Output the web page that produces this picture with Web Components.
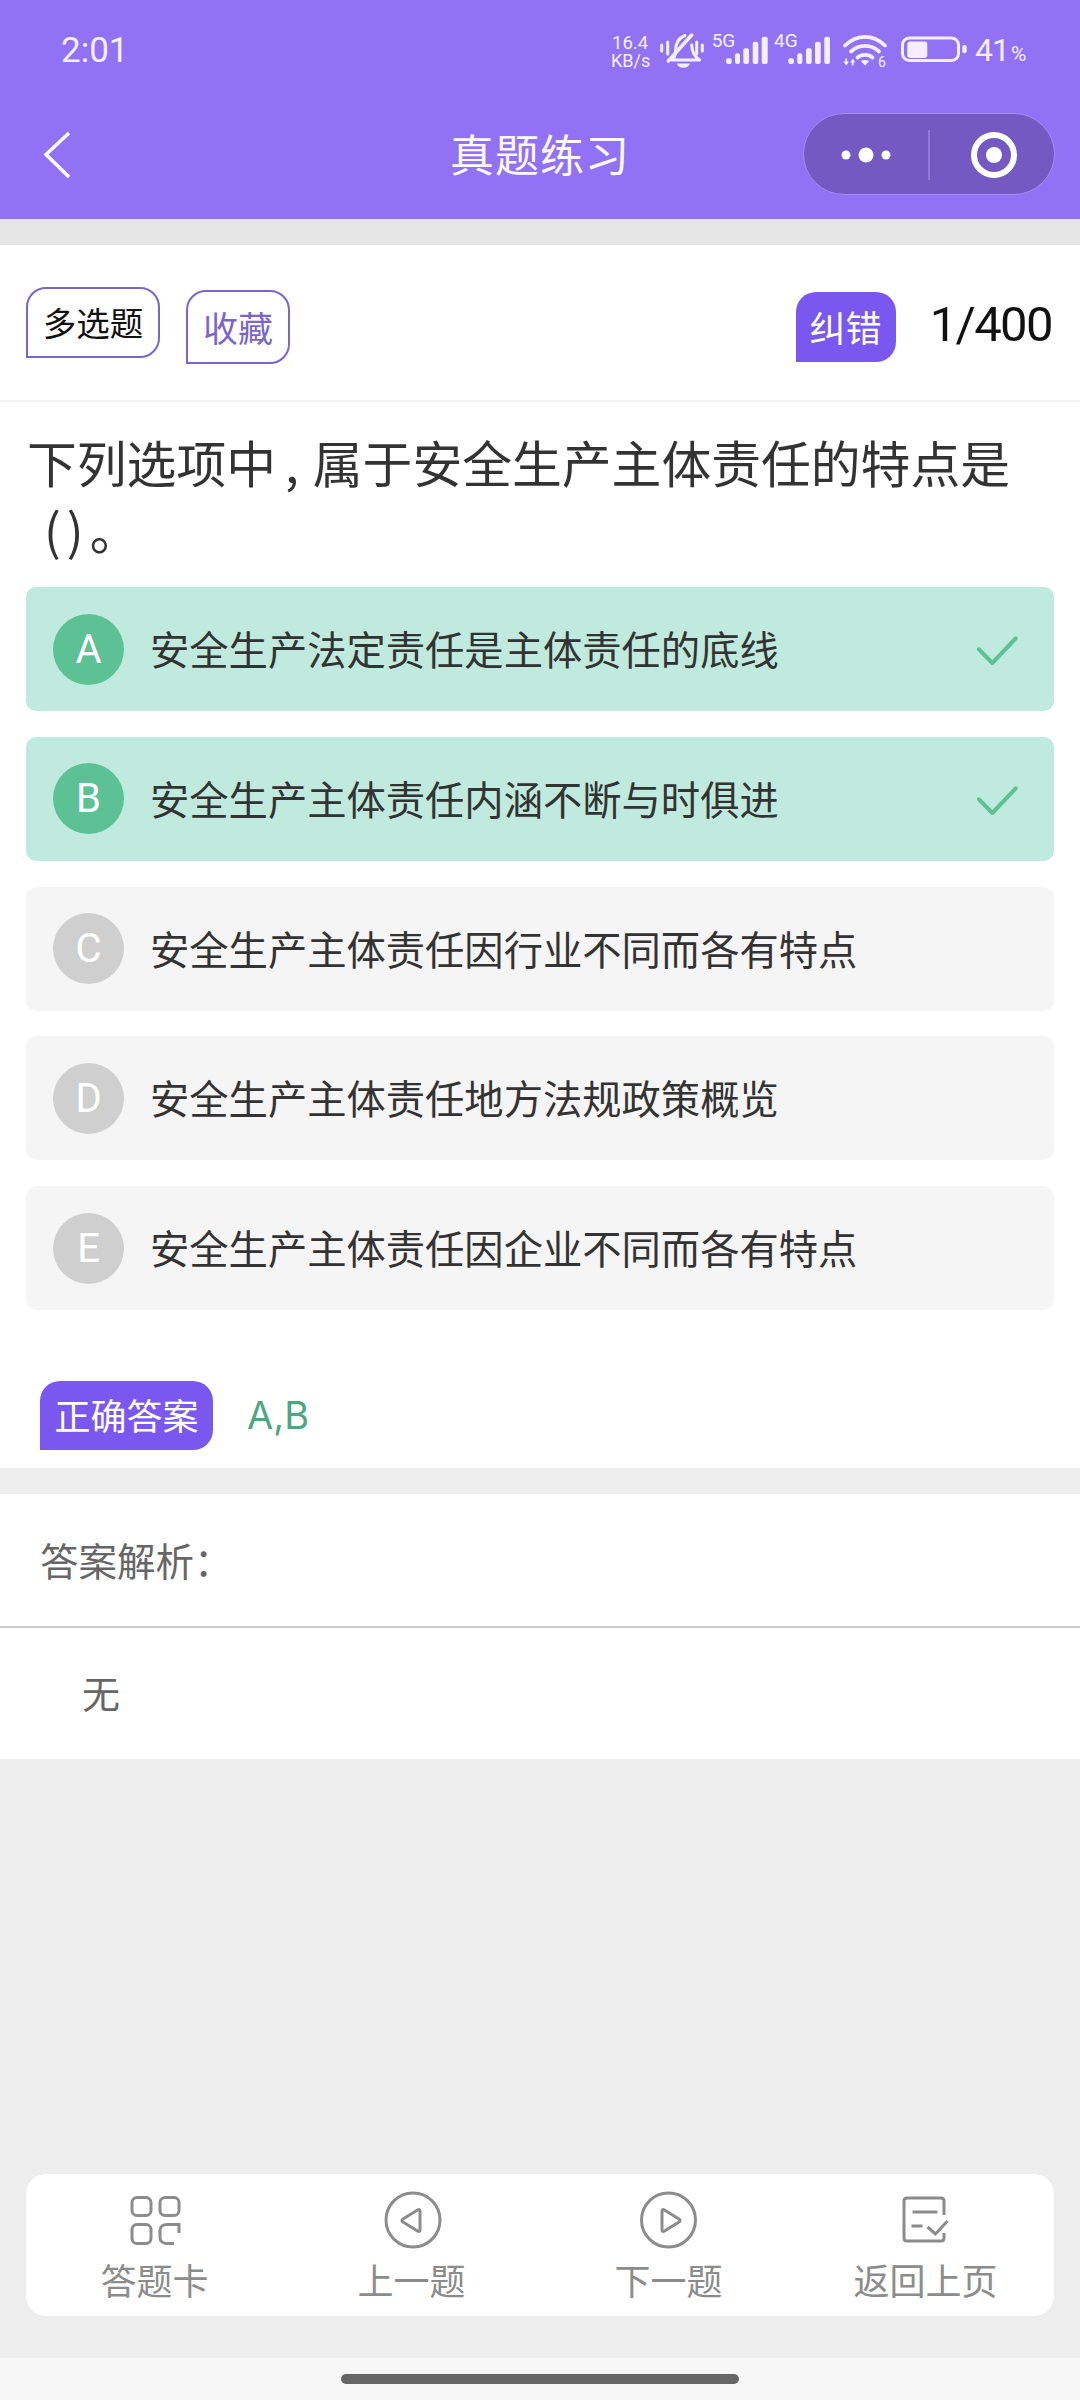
<!DOCTYPE html>
<html lang="zh">
<head>
<meta charset="utf-8">
<style>
  html, body { margin: 0; padding: 0; }
  body {
    width: 1080px;
    height: 2400px;
    background: #ededed;
    display: flex;
    flex-direction: column;
    font-family: "Noto Sans CJK SC", "Noto Sans", sans-serif;
    overflow: hidden;
  }
  exam-body { flex: 1; }
</style>
</head>
<body>
<exam-header title="真题练习"></exam-header>
<exam-body>
  <exam-toolbar current="1/400"></exam-toolbar>
  <exam-question>下列选项中<span style="padding:0 14px 0 9px">,</span>属于安全生产主体责任的特点是<br><span style="margin-left:17px;letter-spacing:6px">()</span>。</exam-question>
  <exam-option letter="A" selected>安全生产法定责任是主体责任的底线</exam-option>
  <exam-option letter="B" selected>安全生产主体责任内涵不断与时俱进</exam-option>
  <exam-option letter="C">安全生产主体责任因行业不同而各有特点</exam-option>
  <exam-option letter="D">安全生产主体责任地方法规政策概览</exam-option>
  <exam-option letter="E">安全生产主体责任因企业不同而各有特点</exam-option>
  <exam-answer value="A,B"></exam-answer>
  <exam-analysis>无</exam-analysis>
</exam-body>
<exam-nav></exam-nav>
<home-bar></home-bar>

<script>
const headerTemplate = document.createElement("template");
headerTemplate.innerHTML = `
<style>
  :host { display: block; height: 219px; background: #9172f4; color: #fff; }
  .status { height: 100px; display: flex; align-items: center; padding: 0 53px 0 61px; box-sizing: border-box; }
  .time { font: 35px Roboto, sans-serif; flex: 1; color: #f3efff; }
  .icons { display: block; flex: none; }
  .bar { height: 118px; position: relative; display: flex; align-items: center; justify-content: center; padding-bottom: 12px; box-sizing: border-box; }
  .back { position: absolute; left: 42px; top: 30px; }
  .title { font-size: 44px; letter-spacing: 1px; color: #fbf9ff; }
  .capsule {
    position: absolute; right: 25px; top: 13px; width: 252px; height: 82px; box-sizing: border-box;
    border-radius: 41px; background: #7459c3; border: 1px solid #a48df0;
  }
  .capsule svg { display: block; }
</style>
<div class="status">
  <span class="time">2:01</span>
  <svg class="icons" width="420" height="54" viewBox="0 0 420 54" fill="#f3efff">
    <text x="5" y="26" font-family="Roboto" font-size="18.500">16.4</text>
    <text x="4" y="43.500" font-family="Roboto" font-size="18">KB/s</text>
    <!-- muted bell -->
    <g fill="none" stroke="#f3efff" stroke-width="3" stroke-linecap="round" stroke-linejoin="round">
      <path d="M54.700 22v6M60.700 19v12M89.700 19v12M95.300 22v6"/>
      <path d="M65 37c2.500-2 3.500-5 3.500-9 0-8 3-13 9.500-15.500M84.700 22c.3 7 3 12 8 15H65"/>
      <path d="M61.300 38L84.700 12" stroke-width="3.500"/>
    </g>
    <path d="M69.700 40.500h13.300c-1 2.800-3.500 4.200-6.600 4.200s-5.700-1.400-6.700-4.200z"/>
    <!-- 5G -->
    <text x="104.700" y="24.300" font-family="Roboto" font-size="19">5G</text>
    <rect x="119" y="35.300" width="5.700" height="5.700" rx="2"/><rect x="128" y="30.300" width="5" height="10.700" rx="2"/>
    <rect x="136.300" y="25.300" width="5.700" height="15.700" rx="2"/><rect x="145.700" y="18.700" width="5.600" height="22.300" rx="2"/>
    <rect x="154.700" y="13.700" width="6" height="27.300" rx="2"/>
    <!-- 4G -->
    <text x="167" y="24.300" font-family="Roboto" font-size="19">4G</text>
    <rect x="181.300" y="35.300" width="5.700" height="5.700" rx="2"/><rect x="190.300" y="30.300" width="5" height="10.700" rx="2"/>
    <rect x="199" y="25.300" width="5.700" height="15.700" rx="2"/><rect x="208" y="18.700" width="5.700" height="22.300" rx="2"/>
    <rect x="217.300" y="13.700" width="5.700" height="27.300" rx="2"/>
    <!-- wifi -->
    <g fill="none" stroke="#f3efff" stroke-width="3.800" stroke-linecap="round">
      <path d="M238 22.500c12-11.500 28-11.500 40 0M244 28.500c8-7.500 20-7.500 28 0M250.500 34.500c4-3.500 11-3.500 15 0"/>
    </g>
    <path d="M253.700 38c2.500-1.500 6-1.500 8.600 0l-4.300 4.500z"/>
    <path d="M236.300 38.500h2v-3h1.700v3h2l-2.800 4zM243.300 39.500l2.700-4 2 4h-1.500v3h-1.700v-3z"/>
    <text x="271" y="44" font-family="Roboto" font-size="14">6</text>
    <!-- battery -->
    <rect x="295.500" y="15" width="56" height="22.500" rx="7" fill="none" stroke="#f3efff" stroke-width="3"/>
    <rect x="300.300" y="18.500" width="20" height="16.500" rx="3"/>
    <rect x="355.300" y="22" width="4.400" height="8.300" rx="2"/>
    <text x="368" y="38" font-family="Roboto" font-size="32" letter-spacing="-1">41</text>
    <text x="404" y="38" font-family="Roboto" font-size="21">%</text>
  </svg>
</div>
<div class="bar">
  <svg class="back" width="30" height="50" viewBox="0 0 30 50" fill="none" stroke="#fff" stroke-width="3.500"><path d="M27 3L4 24.500 27 47"/></svg>
  <span class="title"></span>
  <div class="capsule">
    <svg width="250" height="80" viewBox="0 0 250 80" fill="#fff">
      <circle cx="42" cy="41" r="4.500"/><circle cx="62" cy="41" r="7.500"/><circle cx="82" cy="41" r="4.500"/>
      <path d="M125 16v50" stroke="#9c86e0" stroke-width="1.500"/>
      <circle cx="190" cy="41" r="20" fill="none" stroke="#fff" stroke-width="6"/><circle cx="190" cy="41" r="8"/>
    </svg>
  </div>
</div>`;

class ExamHeader extends HTMLElement {
  constructor() {
    super();
    this.attachShadow({ mode: "open" });
    this.shadowRoot.appendChild(headerTemplate.content.cloneNode(true));
    this.shadowRoot.querySelector(".title").textContent = this.getAttribute("title");
  }
}
customElements.define("exam-header", ExamHeader);

class ExamBody extends HTMLElement {
  constructor() {
    super();
    this.attachShadow({ mode: "open" });
    this.shadowRoot.innerHTML = `
<style>
  :host { display: block; border-top: 26px solid #e6e6e6; }
  .card { background: #fff; }
</style>
<div class="card"><slot></slot></div>`;
  }
}
customElements.define("exam-body", ExamBody);

class ExamToolbar extends HTMLElement {
  constructor() {
    super();
    this.attachShadow({ mode: "open" });
    this.shadowRoot.innerHTML = `
<style>
  :host { display: flex; height: 157px; box-sizing: border-box; border-bottom: 2px solid #f2f2f2; padding: 42px 28px 0 26px; align-items: flex-start; }
  .tag { box-sizing: border-box; border: 2px solid #7a66cb; border-radius: 20px 20px 20px 0; display: flex; align-items: center; justify-content: center; padding-bottom: 2px; }
  .type { width: 134px; height: 71px; font-size: 33.500px; color: #111; }
  .fav { width: 104px; height: 74px; margin: 3px 0 0 26px; font-size: 35px; color: #7a66cb; }
  .fix { box-sizing: border-box; width: 100px; height: 70px; padding-bottom: 2px; margin: 5px 0 0 auto; border-radius: 20px 20px 20px 0; background: #7a58f0; color: #fff; font-size: 36px; display: flex; align-items: center; justify-content: center; }
  .count { margin: 8px 0 0 34px; font: 49px/60px Roboto, sans-serif; letter-spacing: -1.600px; color: #111; }
</style>
<span class="tag type">多选题</span>
<span class="tag fav">收藏</span>
<span class="fix">纠错</span>
<span class="count">${this.getAttribute("current")}</span>`;
  }
}
customElements.define("exam-toolbar", ExamToolbar);

class ExamQuestion extends HTMLElement {
  constructor() {
    super();
    this.attachShadow({ mode: "open" });
    this.shadowRoot.innerHTML = `
<style>
  :host { display: block; padding: 26px 20px 25px 27px; font-size: 49.800px; line-height: 67px; color: #333; }
</style>
<slot></slot>`;
  }
}
customElements.define("exam-question", ExamQuestion);

class ExamOption extends HTMLElement {
  constructor() {
    super();
    const selected = this.hasAttribute("selected");
    this.attachShadow({ mode: "open" });
    this.shadowRoot.innerHTML = `
<style>
  :host { display: flex; align-items: center; height: 124px; margin: 0 26px 25.750px; padding: 0 26px 0 27px; border-radius: 10px; background: ${selected ? "#c0eadd" : "#f5f5f5"}; color: #333; font-size: 39.300px; }
  .letter { flex: none; width: 71px; height: 71px; border-radius: 50%; background: ${selected ? "#5cc194" : "#cfcfcf"}; color: #fff; font: 40px Roboto, sans-serif; display: flex; align-items: center; justify-content: center; margin-right: 26px; }
  .text { flex: 1; padding-bottom: 3px; }
  svg { margin-right: 9px; }
</style>
<span class="letter">${this.getAttribute("letter")}</span>
<span class="text"><slot></slot></span>
${selected ? '<svg width="43" height="34" viewBox="0 0 43 34" fill="none" stroke="#5cc194" stroke-width="4" stroke-linecap="round" stroke-linejoin="round"><path d="M3 17.300L16.300 31 39.700 6.300"/></svg>' : ""}`;
  }
}
customElements.define("exam-option", ExamOption);

class ExamAnswer extends HTMLElement {
  constructor() {
    super();
    this.attachShadow({ mode: "open" });
    this.shadowRoot.innerHTML = `
<style>
  :host { display: flex; align-items: center; padding: 45px 0 18px 40px; }
  .tag { width: 173px; height: 69px; border-radius: 20px 20px 20px 0; background: #7a58f0; color: #fff; font-size: 36px; display: flex; align-items: center; justify-content: center; padding-bottom: 2px; box-sizing: border-box; }
  .value { margin-left: 34px; font: 38px Inter, sans-serif; color: #4ea683; }
</style>
<span class="tag">正确答案</span>
<span class="value">${this.getAttribute("value")}</span>`;
  }
}
customElements.define("exam-answer", ExamAnswer);

class ExamAnalysis extends HTMLElement {
  constructor() {
    super();
    this.attachShadow({ mode: "open" });
    this.shadowRoot.innerHTML = `
<style>
  :host { display: block; border-top: 26px solid #ededed; background: #fff; color: #666; font-size: 38.500px; }
  .head { height: 134px; box-sizing: border-box; padding: 0 0 2px 40px; display: flex; align-items: center; border-bottom: 2px solid #ccc; }
  .body { height: 131px; box-sizing: border-box; padding: 0 0 4px 82px; display: flex; align-items: center; font-size: 38px; }
</style>
<div class="head">答案解析：</div>
<div class="body"><slot></slot></div>`;
  }
}
customElements.define("exam-analysis", ExamAnalysis);

const navIcons = {
  card: '<rect x="6" y="6.500" width="19" height="18" rx="5"/><rect x="34" y="6.500" width="19" height="18" rx="5"/><rect x="6" y="33.500" width="19" height="19" rx="5"/><path d="M53 42v-8.500H41c-4 0-7 2-7 6v7c0 3.500 3 6 7 6h7"/>',
  prev: '<circle cx="30" cy="29" r="27"/><path d="M37 20v19c0 1.500-1 2-2.500 1L20 31c-1.500-1-1.500-2 0-3l14.500-9c1.500-1 2.500-.500 2.500 1z"/>',
  next: '<circle cx="28.500" cy="29" r="27"/><path d="M22 20v19c0 1.500 1 2 2.500 1L39 31c1.500-1 1.500-2 0-3L24.500 19c-1.500-1-2.500-.500-2.500 1z"/>',
  back: '<path d="M47 24V10c0-2-1-3-3-3H10C8 7 7 8 7 10v37c0 2 1 3 3 3h34c2 0 3-1 3-3v-5M15.500 21h25M14.500 35h11M30.500 36l8 7 12-13"/>',
};

class NavItem extends HTMLElement {
  constructor() {
    super();
    this.attachShadow({ mode: "open" });
    this.shadowRoot.innerHTML = `
<style>
  :host { flex: 1; display: flex; flex-direction: column; align-items: center; color: #8c8c8c; font-size: 36px; line-height: 46px; padding-top: 17px; }
  svg { display: block; margin-bottom: 7px; overflow: visible; }
</style>
<svg width="58" height="58" viewBox="0 0 58 58" fill="none" stroke="#8c8c8c" stroke-width="3">${navIcons[this.getAttribute("icon")]}</svg>
<slot></slot>`;
  }
}
customElements.define("nav-item", NavItem);

class ExamNav extends HTMLElement {
  constructor() {
    super();
    this.attachShadow({ mode: "open" });
    this.shadowRoot.innerHTML = `
<style>
  :host { display: flex; height: 142px; margin: 0 26px 42px; background: #fff; border-radius: 20px; overflow: hidden; }
</style>
<nav-item icon="card">答题卡</nav-item>
<nav-item icon="prev">上一题</nav-item>
<nav-item icon="next">下一题</nav-item>
<nav-item icon="back">返回上页</nav-item>`;
  }
}
customElements.define("exam-nav", ExamNav);

class HomeBar extends HTMLElement {
  constructor() {
    super();
    this.attachShadow({ mode: "open" });
    this.shadowRoot.innerHTML = `
<style>
  :host { display: flex; justify-content: center; height: 42px; background: #f6f6f6; box-sizing: border-box; padding-top: 16px; }
  div { width: 398px; height: 10px; border-radius: 5px; background: #666; }
</style>
<div></div>`;
  }
}
customElements.define("home-bar", HomeBar);
</script>
</body>
</html>
